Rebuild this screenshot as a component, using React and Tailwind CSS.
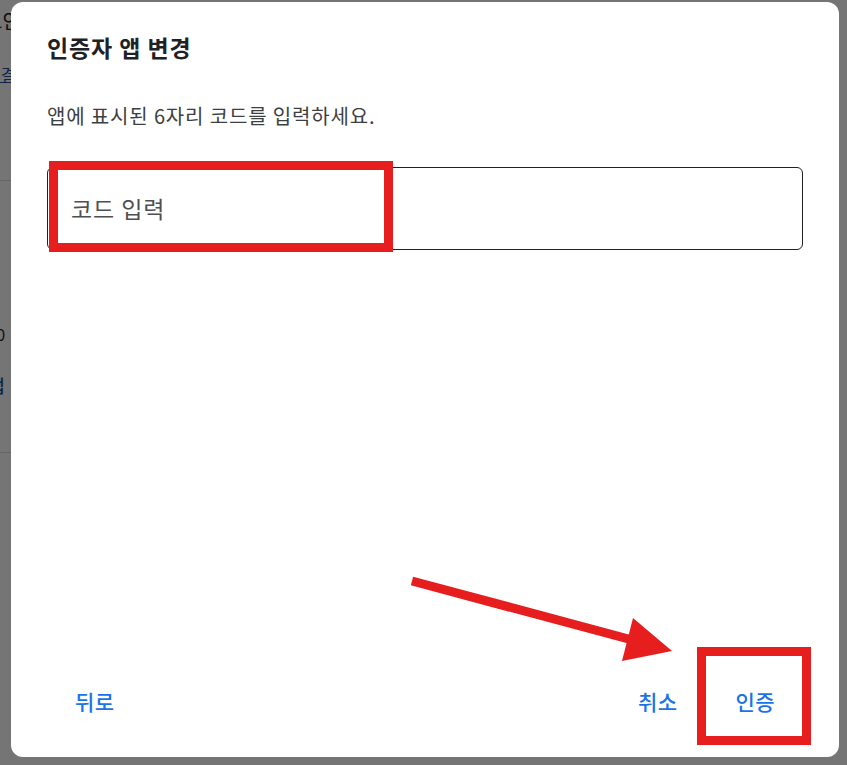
const font = { fontFamily: '"Noto Sans CJK KR", "Noto Sans", sans-serif' };

const BackgroundPage = () => (
    <div className="absolute inset-0 bg-white text-[#202124]">
        {/* bits of the page that peek out at the left edge */}
        <div className="absolute left-[-16px] top-[6px] text-[20px]">보안 설정</div>
        <div className="absolute left-[-14px] top-[62px] text-[16px] text-[#1a4fa0] underline">연결된 기기</div>
        <div className="absolute left-0 top-[180px] w-[60px] border-t border-[#dadce0]" />
        <div className="absolute left-[-8px] top-[322px] text-[16px]">
            <span className="text-[#1a4fa0]">|</span>0
        </div>
        <div className="absolute left-[-12px] top-[372px] text-[18px] font-medium text-[#1a4fa0]">앱</div>
        <div className="absolute left-0 top-[452px] w-[60px] border-t border-[#dadce0]" />
    </div>
);

const Annotations = () => (
    <svg className="absolute inset-0 pointer-events-none" width="847" height="765" viewBox="0 0 847 765">
        <rect x="53.5" y="165.5" width="335" height="82" fill="none" stroke="#e61e1e" strokeWidth="9" />
        <rect x="701.5" y="651.5" width="105" height="89" fill="none" stroke="#e61e1e" strokeWidth="9" />
        <line x1="412" y1="581" x2="636" y2="641" stroke="#e61e1e" strokeWidth="9" />
        <polygon points="633,618 622,661 672,651" fill="#e61e1e" />
    </svg>
);

export default function App() {
    return (
        <div className="relative w-[847px] h-[765px] overflow-hidden" style={font}>
            <BackgroundPage />
            <div className="absolute inset-0 bg-black/[0.54]" />

            <div className="absolute left-[11px] top-[2px] w-[828px] h-[755px] rounded-[12px] bg-white flex flex-col">
                <div className="px-[36px] pt-[30px] flex flex-col">
                    <h1 className="text-[23px] leading-[30px] font-bold tracking-[0.9px] text-[#202124]">인증자 앱 변경</h1>
                    <p className="mt-[40px] text-[20px] leading-[28px] tracking-[0.85px] text-[#3c4043]">
                        앱에 표시된 6자리 코드를 입력하세요.
                    </p>
                    <div className="mt-[37px] h-[83px] rounded-[6px] border border-[#202124] flex items-center px-[23px]">
                        <input
                            className="w-full outline-none text-[23px] tracking-[0.9px] text-[#202124] placeholder:text-[#4d4f52] bg-transparent"
                            style={font}
                            placeholder="코드 입력"
                        />
                    </div>
                </div>

                <div className="mt-auto px-[40px] pb-[31px] flex items-center justify-between">
                    <button className="h-[48px] px-[24px] text-[21px] font-medium tracking-[0.4px] text-[#1a73e8] rounded-md" style={font}>
                        뒤로
                    </button>
                    <div className="flex items-center gap-[10px]">
                        <button className="h-[48px] px-[24px] text-[21px] font-medium tracking-[0.4px] text-[#1a73e8] rounded-md" style={font}>
                            취소
                        </button>
                        <button className="h-[48px] px-[24px] text-[21px] font-medium tracking-[0.4px] text-[#1a73e8] rounded-md" style={font}>
                            인증
                        </button>
                    </div>
                </div>
            </div>

            <Annotations />
        </div>
    );
}
